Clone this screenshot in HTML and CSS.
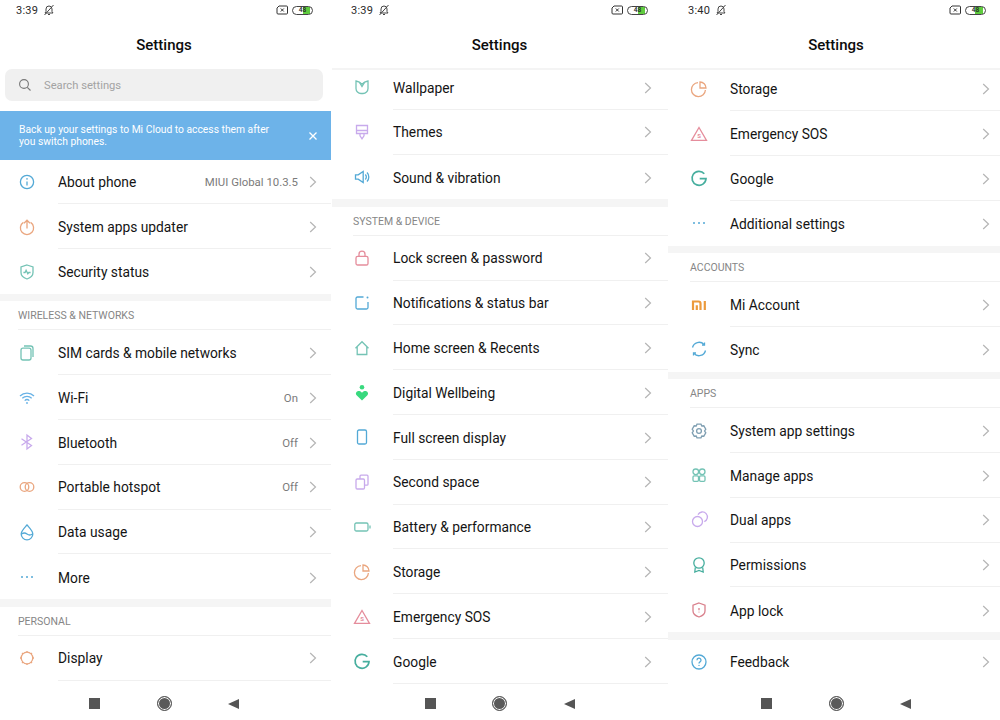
FILE: index.html
```html
<!DOCTYPE html>
<html lang="en">
<head>
<meta charset="utf-8">
<title>Settings</title>
<link rel="stylesheet" href="styles.css">
</head>
<body>
<svg class="sprite" xmlns="http://www.w3.org/2000/svg">
<symbol id="i-info" viewBox="0 0 20 20"><circle cx="10" cy="10" r="6.600"/><path d="M10 9.400v4"/><circle class="dot" cx="10" cy="6.900" r=".8"/></symbol>
<symbol id="i-update" viewBox="0 0 20 20"><path d="M6.400 5.400a6.600 6.600 0 1 0 7.200 0"/><path d="M10 11.500V3.400M7 6.200L10 3.200l3 3"/></symbol>
<symbol id="i-shield" viewBox="0 0 20 20"><path d="M10 3l6 2v5.500c0 3.400-3 5.500-6 6.500-3-1-6-3.100-6-6.500V5z"/><path d="M6.400 10.500h1.700l1-2.200 1.700 3.500 1-1.300h1.800"/></symbol>
<symbol id="i-sim" viewBox="0 0 20 20"><rect x="4" y="5.200" width="10" height="11.800" rx="2"/><path d="M7 3h6.500A2.500 2.500 0 0 1 16 5.500V14"/></symbol>
<symbol id="i-wifi" viewBox="0 0 20 20"><path d="M3 8a10 10 0 0 1 14 0M5.300 10.300a6.700 6.700 0 0 1 9.400 0M7.700 12.600a3.300 3.300 0 0 1 4.600 0"/><circle class="dot" cx="10" cy="15" r=".9"/></symbol>
<symbol id="i-bt" viewBox="0 0 20 20"><path d="M4.500 6.800l10 6.700-4.500 3.500V3l4.500 3.500-10 6.700"/></symbol>
<symbol id="i-hotspot" viewBox="0 0 20 20"><circle cx="7.500" cy="10" r="4.300"/><circle cx="12.500" cy="10" r="4.300"/></symbol>
<symbol id="i-drop" viewBox="0 0 20 20"><path d="M10 3c3 3.400 5.800 6 5.800 9a5.800 5.800 0 0 1-11.600 0C4.200 9 7 6.400 10 3z"/><path d="M4.500 12c2-1.400 3.600-1.400 5.500 0s3.500 1.400 5.500 0"/></symbol>
<symbol id="i-more" viewBox="0 0 20 20"><circle class="dot" cx="5" cy="10" r="1"/><circle class="dot" cx="10" cy="10" r="1"/><circle class="dot" cx="15" cy="10" r="1"/></symbol>
<symbol id="i-display" viewBox="0 0 20 20"><circle cx="10" cy="10" r="5.800"/><path d="M10 3v1.200M10 15.800V17M3 10h1.200M15.800 10H17M5 5l.9.900M14.100 14.100l.9.900M15 5l-.9.900M5.900 14.100L5 15"/></symbol>
<symbol id="i-wallpaper" viewBox="0 0 20 20"><path d="M4 4c2.400.4 4.400 1.400 6 3.200C11.600 5.400 13.600 4.400 16 4v7.500a5 5 0 0 1-5 5H9a5 5 0 0 1-5-5z"/><path d="M7.500 5.500L10 9.500l2.500-4"/></symbol>
<symbol id="i-themes" viewBox="0 0 20 20"><path d="M4.500 3.500h11v8h-11zM4.500 8.500h11M8 11.500v2.300l2 3 2-3v-2.300"/></symbol>
<symbol id="i-sound" viewBox="0 0 20 20"><path d="M3.500 7.800h2.700l5-3.300v11l-5-3.300H3.500z"/><path d="M13.300 7.500a3.500 3.500 0 0 1 0 5M15 5.500a6.500 6.500 0 0 1 0 9"/></symbol>
<symbol id="i-lock" viewBox="0 0 20 20"><rect x="4" y="8.300" width="12" height="8.700" rx="1.600"/><path d="M7 8.300V6.200a3 3 0 0 1 6 0v2.100"/></symbol>
<symbol id="i-notif" viewBox="0 0 20 20"><path d="M11.500 4H5.500A1.500 1.500 0 0 0 4 5.500v9A1.500 1.500 0 0 0 5.500 16h9a1.500 1.500 0 0 0 1.500-1.500V9"/><circle class="dot" cx="15.500" cy="4.500" r="1"/></symbol>
<symbol id="i-home" viewBox="0 0 20 20"><path d="M3.500 10.200L10 3.700l6.500 6.500M5.200 9v7.500h9.600V9"/></symbol>
<symbol id="i-well" viewBox="0 0 20 20"><circle class="dot" cx="10" cy="4.200" r="2.300"/><path class="dot" d="M10 17.500l-5.400-5.300c-1.800-2.200.4-4.800 2.800-4.200 1.200.3 1.900 1 2.600 1.800.7-.8 1.400-1.500 2.600-1.800 2.400-.6 4.600 2 2.800 4.200z"/></symbol>
<symbol id="i-full" viewBox="0 0 20 20"><rect x="5.500" y="3" width="9" height="14" rx="1.500"/></symbol>
<symbol id="i-second" viewBox="0 0 20 20"><rect x="4" y="7" width="8.500" height="10" rx="1.200"/><path d="M8 7V4.200a1 1 0 0 1 1-1h6a1 1 0 0 1 1 1v8a1 1 0 0 1-1 1h-2.500"/></symbol>
<symbol id="i-batt" viewBox="0 0 20 20"><rect x="2.800" y="6" width="13.200" height="8" rx="1.500"/><path d="M18 8.500v3"/></symbol>
<symbol id="i-storage" viewBox="0 0 20 20"><path d="M9 3.600A7 7 0 1 0 16.400 11"/><path d="M11 3a6 6 0 0 1 6 6h-6z"/></symbol>
<symbol id="i-sos" viewBox="0 0 20 20"><path d="M10 3.500l7.500 12.800h-15z"/><text class="sos-s" x="10" y="14.200">S</text></symbol>
<symbol id="i-google" viewBox="0 0 20 20"><path class="thick" d="M15.300 5.700A7 7 0 1 0 17 10.700h-6.300"/></symbol>
<symbol id="i-mi" viewBox="0 0 20 20"><path class="bold" d="M4 15V6.500h5.500A2 2 0 0 1 11.500 8.500V15M7.800 10.200V15M15.800 6V15"/></symbol>
<symbol id="i-sync" viewBox="0 0 20 20"><path d="M3.500 8.500A6.700 6.700 0 0 1 15 5.500M16.500 11.500A6.700 6.700 0 0 1 5 14.500"/><path d="M15.500 3.500v2.500H13M4.500 16.500V14H7"/></symbol>
<symbol id="i-gear" viewBox="0 0 20 20"><path d="M8 3.200h4l.8 1.800 2-.2 2 3.400-1.200 1.800 1.200 1.800-2 3.400-2-.2-.8 1.800H8l-.8-1.800-2 .2-2-3.400L4.400 10 3.200 8.200l2-3.400 2 .2z"/><circle cx="10" cy="10" r="2.400"/></symbol>
<symbol id="i-apps" viewBox="0 0 20 20"><circle cx="6.800" cy="6.800" r="2.800"/><circle cx="13.200" cy="6.800" r="2.800"/><rect x="4" y="10.800" width="5.500" height="5.500" rx="1.200"/><rect x="10.500" y="10.800" width="5.500" height="5.500" rx="1.200"/></symbol>
<symbol id="i-dual" viewBox="0 0 20 20"><circle cx="8.500" cy="11.500" r="5"/><path d="M9 4.600a5 5 0 1 1 6.300 7"/></symbol>
<symbol id="i-perm" viewBox="0 0 20 20"><circle cx="10" cy="8" r="5.200"/><path d="M6.300 12.500L5.800 17l4.200-1.500 4.200 1.500-.5-4.500"/></symbol>
<symbol id="i-applock" viewBox="0 0 20 20"><path d="M10 3l6 2.200V11c0 3-3 5-6 6-3-1-6-3-6-6V5.200z"/><path d="M10 8v2.300"/><circle class="dot" cx="10" cy="12" r=".6"/></symbol>
<symbol id="i-help" viewBox="0 0 20 20"><circle cx="10" cy="10" r="7"/><path d="M8 8.200a2 2 0 1 1 3 1.700c-.7.4-1 .7-1 1.500"/><circle class="dot" cx="10" cy="13.400" r=".7"/></symbol>
<symbol id="i-chev" viewBox="0 0 8 12"><path d="M1.200 1l5.300 5-5.300 5"/></symbol>
<symbol id="i-bell" viewBox="0 0 12 12"><path d="M2 9h8L9 7.500V5a3 3 0 0 0-6 0v2.500zM5 10.500h2M1.500 11L10.500 1"/></symbol>
<symbol id="i-sim-x" viewBox="0 0 12 10"><path d="M3 1h7.500a1 1 0 0 1 1 1v6a1 1 0 0 1-1 1H2a1 1 0 0 1-1-1V3z"/><path d="M4.800 3.500l3 3M7.800 3.500l-3 3"/></symbol>
</svg>

<main class="screens">

<section class="phone p1">
<div class="status"><span class="time">3:39</span><svg class="bell"><use href="#i-bell"/></svg><span class="spacer"></span><svg class="simx"><use href="#i-sim-x"/></svg><span class="batt">48</span></div>
<h1 class="title">Settings</h1>
<div class="list">
<div class="search"><svg class="search-ico" viewBox="0 0 14 14"><circle cx="6" cy="6" r="4.400"/><path d="M9.300 9.300l3.200 3.200"/></svg><span>Search settings</span></div>
<div class="banner"><p>Back up your settings to Mi Cloud to access them after you switch phones.</p><svg class="close" viewBox="0 0 10 10"><path d="M1.500 1.500l7 7M8.500 1.500l-7 7"/></svg></div>
<div class="row"><svg class="ico c-blue"><use href="#i-info"/></svg><div class="body"><span class="label">About phone</span><span class="val">MIUI Global 10.3.5</span><svg class="chev"><use href="#i-chev"/></svg></div></div>
<div class="row"><svg class="ico c-orange"><use href="#i-update"/></svg><div class="body"><span class="label">System apps updater</span><svg class="chev"><use href="#i-chev"/></svg></div></div>
<div class="row last"><svg class="ico c-teal"><use href="#i-shield"/></svg><div class="body"><span class="label">Security status</span><svg class="chev"><use href="#i-chev"/></svg></div></div>
<div class="gap"></div>
<div class="head"><span>WIRELESS &amp; NETWORKS</span></div>
<div class="row"><svg class="ico c-teal"><use href="#i-sim"/></svg><div class="body"><span class="label">SIM cards &amp; mobile networks</span><svg class="chev"><use href="#i-chev"/></svg></div></div>
<div class="row"><svg class="ico c-sky"><use href="#i-wifi"/></svg><div class="body"><span class="label">Wi-Fi</span><span class="val">On</span><svg class="chev"><use href="#i-chev"/></svg></div></div>
<div class="row"><svg class="ico c-purple"><use href="#i-bt"/></svg><div class="body"><span class="label">Bluetooth</span><span class="val">Off</span><svg class="chev"><use href="#i-chev"/></svg></div></div>
<div class="row"><svg class="ico c-orange"><use href="#i-hotspot"/></svg><div class="body"><span class="label">Portable hotspot</span><span class="val">Off</span><svg class="chev"><use href="#i-chev"/></svg></div></div>
<div class="row"><svg class="ico c-blue"><use href="#i-drop"/></svg><div class="body"><span class="label">Data usage</span><svg class="chev"><use href="#i-chev"/></svg></div></div>
<div class="row last"><svg class="ico c-blue"><use href="#i-more"/></svg><div class="body"><span class="label">More</span><svg class="chev"><use href="#i-chev"/></svg></div></div>
<div class="gap"></div>
<div class="head"><span>PERSONAL</span></div>
<div class="row"><svg class="ico c-orange"><use href="#i-display"/></svg><div class="body"><span class="label">Display</span><svg class="chev"><use href="#i-chev"/></svg></div></div>
</div>
<nav class="nav"><span class="n-square"></span><span class="n-circle"></span><span class="n-back"></span></nav>
</section>

<section class="phone p2">
<div class="status"><span class="time">3:39</span><svg class="bell"><use href="#i-bell"/></svg><span class="spacer"></span><svg class="simx"><use href="#i-sim-x"/></svg><span class="batt">48</span></div>
<h1 class="title">Settings</h1>
<div class="list">
<div class="row"><svg class="ico c-teal"><use href="#i-wallpaper"/></svg><div class="body"><span class="label">Wallpaper</span><svg class="chev"><use href="#i-chev"/></svg></div></div>
<div class="row"><svg class="ico c-purple"><use href="#i-themes"/></svg><div class="body"><span class="label">Themes</span><svg class="chev"><use href="#i-chev"/></svg></div></div>
<div class="row last"><svg class="ico c-blue"><use href="#i-sound"/></svg><div class="body"><span class="label">Sound &amp; vibration</span><svg class="chev"><use href="#i-chev"/></svg></div></div>
<div class="gap"></div>
<div class="head"><span>SYSTEM &amp; DEVICE</span></div>
<div class="row"><svg class="ico c-pink"><use href="#i-lock"/></svg><div class="body"><span class="label">Lock screen &amp; password</span><svg class="chev"><use href="#i-chev"/></svg></div></div>
<div class="row"><svg class="ico c-blue"><use href="#i-notif"/></svg><div class="body"><span class="label">Notifications &amp; status bar</span><svg class="chev"><use href="#i-chev"/></svg></div></div>
<div class="row"><svg class="ico c-teal"><use href="#i-home"/></svg><div class="body"><span class="label">Home screen &amp; Recents</span><svg class="chev"><use href="#i-chev"/></svg></div></div>
<div class="row"><svg class="ico c-green"><use href="#i-well"/></svg><div class="body"><span class="label">Digital Wellbeing</span><svg class="chev"><use href="#i-chev"/></svg></div></div>
<div class="row"><svg class="ico c-blue"><use href="#i-full"/></svg><div class="body"><span class="label">Full screen display</span><svg class="chev"><use href="#i-chev"/></svg></div></div>
<div class="row"><svg class="ico c-purple"><use href="#i-second"/></svg><div class="body"><span class="label">Second space</span><svg class="chev"><use href="#i-chev"/></svg></div></div>
<div class="row"><svg class="ico c-teal"><use href="#i-batt"/></svg><div class="body"><span class="label">Battery &amp; performance</span><svg class="chev"><use href="#i-chev"/></svg></div></div>
<div class="row"><svg class="ico c-orange"><use href="#i-storage"/></svg><div class="body"><span class="label">Storage</span><svg class="chev"><use href="#i-chev"/></svg></div></div>
<div class="row"><svg class="ico c-pink"><use href="#i-sos"/></svg><div class="body"><span class="label">Emergency SOS</span><svg class="chev"><use href="#i-chev"/></svg></div></div>
<div class="row"><svg class="ico c-gteal"><use href="#i-google"/></svg><div class="body"><span class="label">Google</span><svg class="chev"><use href="#i-chev"/></svg></div></div>
</div>
<nav class="nav"><span class="n-square"></span><span class="n-circle"></span><span class="n-back"></span></nav>
</section>

<section class="phone p3">
<div class="status"><span class="time">3:40</span><svg class="bell"><use href="#i-bell"/></svg><span class="spacer"></span><svg class="simx"><use href="#i-sim-x"/></svg><span class="batt">48</span></div>
<h1 class="title">Settings</h1>
<div class="list">
<div class="row"><svg class="ico c-orange"><use href="#i-storage"/></svg><div class="body"><span class="label">Storage</span><svg class="chev"><use href="#i-chev"/></svg></div></div>
<div class="row"><svg class="ico c-pink"><use href="#i-sos"/></svg><div class="body"><span class="label">Emergency SOS</span><svg class="chev"><use href="#i-chev"/></svg></div></div>
<div class="row"><svg class="ico c-gteal"><use href="#i-google"/></svg><div class="body"><span class="label">Google</span><svg class="chev"><use href="#i-chev"/></svg></div></div>
<div class="row last"><svg class="ico c-blue"><use href="#i-more"/></svg><div class="body"><span class="label">Additional settings</span><svg class="chev"><use href="#i-chev"/></svg></div></div>
<div class="gap"></div>
<div class="head"><span>ACCOUNTS</span></div>
<div class="row"><svg class="ico c-mi"><use href="#i-mi"/></svg><div class="body"><span class="label">Mi Account</span><svg class="chev"><use href="#i-chev"/></svg></div></div>
<div class="row last"><svg class="ico c-blue"><use href="#i-sync"/></svg><div class="body"><span class="label">Sync</span><svg class="chev"><use href="#i-chev"/></svg></div></div>
<div class="gap"></div>
<div class="head"><span>APPS</span></div>
<div class="row"><svg class="ico c-slate"><use href="#i-gear"/></svg><div class="body"><span class="label">System app settings</span><svg class="chev"><use href="#i-chev"/></svg></div></div>
<div class="row"><svg class="ico c-teal"><use href="#i-apps"/></svg><div class="body"><span class="label">Manage apps</span><svg class="chev"><use href="#i-chev"/></svg></div></div>
<div class="row"><svg class="ico c-purple"><use href="#i-dual"/></svg><div class="body"><span class="label">Dual apps</span><svg class="chev"><use href="#i-chev"/></svg></div></div>
<div class="row"><svg class="ico c-gteal"><use href="#i-perm"/></svg><div class="body"><span class="label">Permissions</span><svg class="chev"><use href="#i-chev"/></svg></div></div>
<div class="row last"><svg class="ico c-red"><use href="#i-applock"/></svg><div class="body"><span class="label">App lock</span><svg class="chev"><use href="#i-chev"/></svg></div></div>
<div class="gap"></div>
<div class="row"><svg class="ico c-blue"><use href="#i-help"/></svg><div class="body"><span class="label">Feedback</span><svg class="chev"><use href="#i-chev"/></svg></div></div>
</div>
<nav class="nav"><span class="n-square"></span><span class="n-circle"></span><span class="n-back"></span></nav>
</section>

</main>
</body>
</html>
```

FILE: styles.css
```css
* { box-sizing: border-box; }
html, body { margin: 0; padding: 0; height: 720px; overflow: hidden; background: #fff; }
body { font-family: Roboto, "Liberation Sans", sans-serif; color: #111; }
.sprite { display: none; }
.screens { display: flex; height: 720px; }

.phone { display: flex; flex-direction: column; height: 720px; overflow: hidden; background: #fff; }
.p1 { width: 331px; --off: 0px; --end: 15px; --title-end: 3px; --top: 0px; margin-right: 1px; }
.p2 { width: 336px; --off: 3px; --end: 17px; --title-end: 4px; --top: -5px; }
.p3 { width: 332px; --off: 4px; --end: 11px; --title-end: 0px; --top: -3.500px; }

.status { flex: none; height: 18px; padding-left: calc(16px + var(--off)); padding-right: calc(var(--end) + 3px); display: flex; align-items: center; font-size: 11px; color: #2a2a2a; }
.time { letter-spacing: .2px; margin-top: 2px; }
.bell { width: 12px; height: 12px; margin-left: 5px; margin-top: 2px; fill: none; stroke: #444; stroke-width: 1; }
.spacer { flex: 1; }
.simx { width: 12px; height: 10px; fill: none; stroke: #333; stroke-width: 1; margin-top: 2px; }
.batt { width: 21px; height: 9px; margin: 2px 0 0 4px; border: 1px solid #444; border-radius: 5px; font-size: 6.500px; font-weight: 500; line-height: 7px; text-align: center; color: #222; background: linear-gradient(90deg, #fff 50%, #5fcb3e 50%, #5fcb3e 92%, #fff 92%); }

.title { flex: none; height: 51px; margin: 0; padding-left: var(--off); padding-right: var(--title-end); padding-top: 3px; display: flex; align-items: center; justify-content: center; font-size: 15px; font-weight: 500; color: #0c0c0c; }
.p2 .title, .p3 .title { border-bottom: 2px solid #f4f4f4; height: 52px; }

.list { flex: 1; min-height: 0; overflow: hidden; }
.list > :first-child { margin-top: var(--top); }

.search { height: 32px; margin: 0 8px 10px 5px; border-radius: 7px; background: #f0f0f0; display: flex; align-items: center; padding-left: 13px; font-size: 11.200px; color: #a3a3a3; }
.search-ico { width: 14px; height: 14px; margin-right: 12px; fill: none; stroke: #777; stroke-width: 1.100; }
.banner { height: 48.600px; background: #6db3e9; display: flex; align-items: center; padding: 1px 13px 0 19px; color: #fff; font-size: 10.300px; line-height: 12px; }
.banner p { margin: 0; width: 262px; flex: none; }
.close { width: 10px; height: 10px; margin-left: auto; fill: none; stroke: #fff; stroke-width: 1.300; }

.row { height: 44.800px; display: flex; align-items: center; padding-left: calc(16.500px + var(--off)); }
.ico { width: 20px; height: 20px; flex: none; fill: none; stroke: currentColor; stroke-width: 1.300; }
.dot { fill: currentColor; stroke: none; }
.thick { stroke-width: 1.700; }
.bold { stroke-width: 2.200; }
.sos-s { fill: currentColor; stroke: none; font-size: 6px; font-weight: 700; text-anchor: middle; }
.body { flex: 1; height: 100%; margin-left: 21.500px; padding-right: var(--end); padding-top: 1.400px; display: flex; align-items: center; border-bottom: 1px solid #f0f0f0; }
.last .body { border-bottom: 0; }
.label { flex: 1; font-size: 13.800px; color: #141414; }
.val { font-size: 11.400px; color: #7b7b7b; margin-right: 11px; }
.chev { width: 8px; height: 12px; flex: none; margin-right: -1px; fill: none; stroke: #b5b5b5; stroke-width: 1.200; }

.gap { height: 7.500px; background: #f5f5f5; }
.head { height: 29px; padding-left: calc(18px + var(--off)); display: flex; }
.head span { flex: 1; display: flex; align-items: center; border-bottom: 1px solid #f0f0f0; font-size: 10.500px; color: #868686; padding-top: 1px; }

.nav { flex: none; height: 36px; background: #fff; display: flex; align-items: center; justify-content: center; gap: 56.500px; padding-left: var(--off); padding-right: var(--title-end); padding-top: 3px; }
.n-square { width: 11px; height: 11px; background: #555; }
.n-circle { width: 15px; height: 15px; border-radius: 50%; background: #5a5a5a; border: 1px solid #555; box-shadow: inset 0 0 0 1px #fff; }
.n-back { width: 0; height: 0; border-style: solid; border-width: 5.500px 11px 5.500px 0; border-color: transparent #555 transparent transparent; }

.c-blue { color: #53a9d6; }
.c-sky { color: #68b2e6; }
.c-orange { color: #eaa67f; }
.c-teal { color: #74c3b5; }
.c-gteal { color: #46ae9e; }
.c-purple { color: #c8aaec; }
.c-pink { color: #e58d9c; }
.c-red { color: #d9808c; }
.c-green { color: #38d97e; }
.c-mi { color: #ec9a3c; }
.c-slate { color: #7f9fb2; }
```
